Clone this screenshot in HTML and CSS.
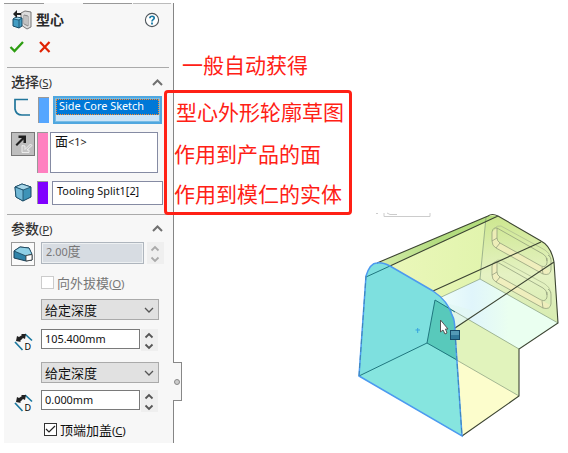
FILE: index.html
```html
<!DOCTYPE html>
<html lang="zh-CN">
<head>
<meta charset="utf-8">
<title>型心</title>
<link rel="stylesheet" href="styles.css">
</head>
<body>
<main class="app">
  <aside class="panel">
    <span class="edge edge-a"></span><span class="edge edge-b"></span><span class="edge edge-c"></span>
    <header class="head">
      <svg class="core-icon" width="20" height="20" viewBox="0 0 20 20">
        <path d="M9 3l4-2 6 1v15l-4 2-6-4z" fill="#ddd" stroke="#777"/>
        <path d="M12 5l4 1v10l-4-2zM14 5v10" fill="#fafafa" stroke="#888"/>
        <path d="M1 9l3-2 6 1v8l-3 2-6-2z" fill="#439dc3" stroke="#174a66"/>
        <path d="M2 9l3-1.500 4 .7-2 1.500z" fill="#9ed3e8"/>
        <path d="M1 9l6 1 3-2M7 10v8" fill="none" stroke="#174a66" stroke-width=".8"/>
        <path d="M1 4l4-4v3h4v2H5v3z" fill="#222"/>
      </svg>
      <h1>型心</h1>
      <svg class="help" width="16" height="16" viewBox="0 0 16 16">
        <circle cx="8" cy="8" r="6.600" fill="#fff" stroke="#4d555b" stroke-width="1.100"/>
        <path d="M5.900 6.200C6 3.500 10.400 3.700 10.200 6.100 10 7.700 8 7.600 8 9.500" fill="none" stroke="#1879a5" stroke-width="1.700"/>
        <path d="M7.100 10.600h1.800v1.800H7.100z" fill="#1879a5"/>
      </svg>
    </header>
    <div class="actions">
      <svg width="16" height="14" viewBox="0 0 16 14"><path d="M1.500 7l4 4L14 2" fill="none" stroke="#2d9d11" stroke-width="2.300"/></svg>
      <svg width="12" height="12" viewBox="0 0 12 12"><path d="M1 1l9.500 10M10.500 1L1 11" stroke="#e02303" stroke-width="2.200"/></svg>
    </div>
    <section class="group selection">
      <h2><span>选择<small>(<u>S</u>)</small></span><svg class="chev" width="11" height="7" viewBox="0 0 11 7"><path d="M1 6l4.500-4.500L10 6"/></svg></h2>
      <div class="pick pick-sketch">
        <svg width="20" height="20" viewBox="0 0 20 20"><path d="M16 2.500H3V12q1 6 7 6h8" fill="none" stroke="#21769b" stroke-width="1.700"/></svg>
        <i class="swatch blue"></i>
        <div class="active-box"><span>Side Core Sketch</span></div>
      </div>
      <div class="pick pick-face">
        <span class="tool pressed"><svg width="22" height="22" viewBox="0 0 22 22"><path d="M3.500 11.500L10 5H6.500V2.500H14V10h-2.500V6.500L5 13z" fill="#202020"/><path d="M18.500 11l-5.500 5.500V13l-3-.500v7h7V17h-2l5-4.500z" fill="#c4c4c4" stroke="#f2f2f2" stroke-width=".9"/></svg></span>
        <i class="swatch pink"></i>
        <div class="box"><b>面</b>&lt;1&gt;</div>
      </div>
      <div class="pick pick-body">
        <svg width="18" height="20" viewBox="0 0 18 20"><path d="M1 5l7-3 9 3v10l-8 4-7-4z" fill="#3d93b7" stroke="#174863"/><path d="M1 5l7-3 9 3-8 3z" fill="#a8d7e9" stroke="#174863" stroke-width=".8"/><path d="M1 5l8 3v11l-7-4z" fill="#71b8d6" stroke="#174863" stroke-width=".8"/></svg>
        <i class="swatch purple"></i>
        <div class="box">Tooling Split1[2]</div>
      </div>
    </section>
    <section class="group params">
      <h2><span>参数<small>(<u>P</u>)</small></span><svg class="chev" width="11" height="7" viewBox="0 0 11 7"><path d="M1 6l4.500-4.500L10 6"/></svg></h2>
      <div class="draft">
        <span class="tool"><svg width="22" height="22" viewBox="0 0 22 22"><path d="M2 8L8 4l9 1 3 7v5l-6 1L2 15z" fill="#2f83a8" stroke="#183f55"/><path d="M2 8L8 4l9 1 3 6-6 2z" fill="#8fd0e6" stroke="#183f55" stroke-width=".8"/><path d="M14 12.500l6-1V17l-6 1z" fill="#fff" stroke="#333" stroke-width=".8"/></svg></span>
        <div class="angle">2.00<b>度</b></div>
        <svg class="spin off" width="17" height="22" viewBox="0 0 17 22"><path d="M4.500 8.500L8 5l3.500 3.500M4.500 15.500L8 19l3.500-3.500"/></svg>
      </div>
      <div class="check muted"><i class="tick"></i><span>向外拔模<small>(<u>O</u>)</small></span></div>
      <div class="select"><span>给定深度</span><svg width="10" height="6" viewBox="0 0 10 6"><path d="M1 1l4 4 4-4"/></svg></div>
      <div class="depth">
        <svg class="dim" width="19" height="20" viewBox="0 0 19 20"><path d="M1 10l7.500 8M11 2l7 6.500" stroke="#1b789f" stroke-width="1.700"/><path d="M2 9l1-5 2 1 3-2-1-1h5l-1 5-2-1-3 3 1 1z" fill="#222"/><text x="10.500" y="18">D</text></svg>
        <div class="num">105.400mm</div>
        <svg class="spin" width="17" height="22" viewBox="0 0 17 22"><path d="M4.500 8.500L8 5l3.500 3.500M4.500 15.500L8 19l3.500-3.500"/></svg>
      </div>
      <div class="select second"><span>给定深度</span><svg width="10" height="6" viewBox="0 0 10 6"><path d="M1 1l4 4 4-4"/></svg></div>
      <div class="depth last">
        <svg class="dim" width="19" height="20" viewBox="0 0 19 20"><path d="M1 10l7.500 8M11 2l7 6.500" stroke="#1b789f" stroke-width="1.700"/><path d="M2 9l1-5 2 1 3-2-1-1h5l-1 5-2-1-3 3 1 1z" fill="#222"/><text x="10.500" y="18">D</text></svg>
        <div class="num">0.000mm</div>
        <svg class="spin" width="17" height="22" viewBox="0 0 17 22"><path d="M4.500 8.500L8 5l3.500 3.500M4.500 15.500L8 19l3.500-3.500"/></svg>
      </div>
      <div class="check cap"><i class="tick"><svg width="11" height="11" viewBox="0 0 11 11"><path d="M1 5l3 3 6-6" fill="none" stroke="#222" stroke-width="1.200"/></svg></i><span>顶端加盖<small>(<u>C</u>)</small></span></div>
    </section>
    <div class="handle"><i></i></div>
  </aside>

  <svg class="model" width="218" height="243" viewBox="350 200 218 243">
    <defs>
      <linearGradient id="top" x1="0" x2="1"><stop stop-color="#edf8bd"/><stop offset=".65" stop-color="#e1f4ad"/><stop offset="1" stop-color="#cce89a"/></linearGradient>
      <linearGradient id="side" x1="0" y1="0" x2="0" y2="1"><stop stop-color="#cde78f"/><stop offset=".55" stop-color="#e5f2c3"/><stop offset="1" stop-color="#d7ecb0"/></linearGradient>
      <linearGradient id="floor" x1="0" x2="1"><stop stop-color="#f1fffa"/><stop offset=".3" stop-color="#e0f5fb"/><stop offset=".6" stop-color="#eafff0"/></linearGradient>
      <linearGradient id="rim" x1="0" x2="1"><stop stop-color="#d5edab"/><stop offset=".5" stop-color="#b3dc80"/><stop offset="1" stop-color="#b5de7c"/></linearGradient>
    </defs>
    <g class="toolbar"><path d="M376 213.500h2M384 213v3.500h46V213"/><path d="M387 213l3 1.500h7" stroke="#aaa"/></g>
    <path d="M377 263L488 216Q492 213 498 216L541 241Q551 246 554 262L558 323 519 349V396L462 436 359 376 366 276Q370 265 377 263z" fill="url(#top)"/>
    <path d="M486 218L498 216 541 241Q551 246 554 262L558 323 480 279z" fill="url(#side)"/>
    <path d="M435 300L480 279 558 323 519 349z" fill="url(#floor)"/>
    <path d="M435 300L519 349V396L427 343z" fill="#e1f3bc"/>
    <path d="M427 343L519 396 462 436 359 376z" fill="#fcfdcc"/>
    <path d="M377 263L488 216 498 216 390 266z" fill="url(#rim)"/>
    <path d="M454 328L479 312 435 300z" fill="#e1f6f4" opacity=".8"/>
    <g class="slots">
      <path class="slot-fill" d="M492 232V241Q492 246 496 248L543 274Q548 276 550 271L541 266 500 243Q497 241 497 238V228z"/>
      <path d="M492 232V241Q492 246 496 248L543 274Q550 276 551 270V260Q551 257 548 255M497 228V238Q497 241 500 243L541 266Q546 268 547 263V258M492 232Q493 227 497 228L543 254Q547 256 547 261M492 241l5-3M496 248l4-5M543 274l-1-7"/>
      <path class="slot-rear" d="M494 229Q497 225 501 226L545 250Q550 253 551 259"/>
      <path class="slot-fill" d="M492 266V275Q492 280 496 282L543 308Q548 310 550 305L541 300 500 277Q497 275 497 272V262z"/>
      <path d="M492 266V275Q492 280 496 282L543 308Q550 310 551 304V294Q551 291 548 289M497 262V272Q497 275 500 277L541 300Q546 302 547 297V292M492 266Q493 261 497 262L543 288Q547 290 547 295M492 275l5-3M496 282l4-5M543 308l-1-7"/>
      <path class="slot-rear" d="M494 263Q497 259 501 260L545 284Q550 287 551 293"/>
    </g>
    <g class="inner"><path d="M486 217L480 279 435 300M480 279L558 323M435 300L519 349M427 343L519 396"/></g>
    <path d="M359 376L366 276Q370 263 377 263 382 262 390 266L433 291Q448 301 452 315 455 320 455 332L462 436z" fill="#7ee0df"/>
    <path d="M427 343L359 376 462 436 457 360z" fill="#86e5df"/>
    <path d="M435 300L427 343 456 360 455 327Q453 318 451 309z" fill="#58c9bb"/>
    <path class="hidden-edge" d="M366 277L390 266M359 376L427 343 435 300 455 312M427 343L457 360"/>
    <g class="lines"><path d="M377 263L488 216Q492 213 498 216L541 241Q551 246 554 262L558 323 519 349V396L462 436M390 266L498 216M433 291L541 242M455 328L554 262"/></g>
    <path class="face-edge" d="M359 376L366 276Q370 263 377 263 382 262 390 266L433 291Q448 301 452 315 455 320 455 332L462 436z"/>
    <path class="dashes" d="M359 376L366 276M455 332L462 436"/>
    <path d="M415.500 330H420M417.700 328V333" stroke="#36a3df"/>
    <rect x="450.500" y="330.500" width="9" height="9" fill="#31799c" stroke="#174a68"/><path d="M451 331h8v4h-8z" fill="#5499b6"/>
    <path d="M440.500 320V332L443 330 445 334 447 333 445.500 329H448z" fill="#fff" stroke="#555"/>
  </svg>

  <div class="notes">
    <p class="auto">一般自动获得</p>
    <div class="callout"><p>型心外形轮廓草图</p><p>作用到产品的面</p><p>作用到模仁的实体</p></div>
  </div>
</main>
</body>
</html>
```

FILE: styles.css
```css
* { box-sizing: border-box; }
body { margin: 0; background: #fff; overflow: hidden; }
.app { position: relative; width: 568px; height: 453px; display: flex; align-items: flex-start; font-family: "Noto Sans", "Noto Sans CJK SC", sans-serif; }
h1, h2, p { margin: 0; }
svg { display: block; flex: none; }
.panel { position: relative; width: 170px; height: 440px; margin: 3px 0 0 4px; background: #f7f7f7; border-right: 1px solid #858585; font-size: 10.9px; color: #111; }
.edge { position: absolute; top: 0; height: 1px; background: #999; }
.edge-a { left: 0; width: 40px; }
.edge-b { left: 79px; width: 49px; }
.edge-c { left: 129px; width: 38px; background: #bbb; }
.head { display: flex; align-items: center; height: 34px; padding: 0 13px 0 8px; }
.head h1 { font: bold 14px/20px "Noto Sans CJK SC", sans-serif; margin: -2px 0 0 4px; color: #292929; flex: 1; }
.actions { height: 31px; margin: 0 4px 0 3px; padding: 3px 2px 0; border-bottom: 1px solid #aaa; display: flex; gap: 14px; align-items: flex-start; }
.actions svg:last-child { margin-top: 1px; }
.group h2 { height: 28px; display: flex; align-items: center; justify-content: space-between; padding: 0 10px 0 7px; font: 500 14px/20px "Noto Sans CJK SC", sans-serif; color: #333; }
.group h2 span { margin-top: -2px; }
.group small { font: 11.5px "Noto Sans", sans-serif; letter-spacing: -.2px; }
.chev path { fill: none; stroke: #707070; stroke-width: 2; }
.pick { display: flex; align-items: flex-start; }
.swatch { flex: none; width: 11px; border-left: 1px solid #999; border-top: 1px solid #999; }
.blue { background: #55a6ff; height: 26px; }
.pink { background: #ff80c0; height: 41px; }
.purple { background: #8000ff; height: 23px; }
.pick-sketch { height: 36px; padding-left: 8px; }
.pick-sketch > svg { margin: 1px 0 0 0; }
.pick-sketch .swatch { margin: 1px 4px 0 6px; }
.active-box { width: 109px; height: 28px; border: 2px solid #50a7df; outline: 1px solid #78bce5; outline-offset: -3px; padding: 1px; background: #cce4f7; }
.active-box span { display: block; height: 16px; border: 1px dotted #ff8b29; background: #0078d7; color: #fff; line-height: 12px; padding-left: 2px; white-space: nowrap; }
.pick-face { height: 49px; padding-left: 7px; }
.tool { flex: none; width: 24px; height: 24px; border: 1px solid #999; background: #fafafa; }
.pressed { background: #bebebe; border-color: #777; }
.pick-face .swatch { margin: 0 2px; }
.box { border: 1px solid #858ba3; background: #fff; white-space: nowrap; }
.box b, .angle b { font: 13px/16px "Noto Sans CJK SC", sans-serif; }
.pick-face .box { width: 108px; height: 41px; padding-left: 4px; line-height: 16px; }
.pick-body { height: 34px; border-bottom: 1px solid #aaa; margin: 0 4px 0 3px; padding-left: 7px; }
.pick-body > svg { margin-top: 1px; }
.pick-body .swatch { margin: 0 4px 0 5px; }
.pick-body .box { width: 111px; height: 24px; padding-left: 4px; line-height: 18px; flex: none; }
.params h2 { height: 27px; }
.params h2 span { margin-top: -1px; }
.draft { display: flex; height: 34px; padding-left: 7px; }
.angle { width: 103px; height: 22px; margin-left: 6px; border: 1px solid #aeb5bd; outline: 1px solid #edf0f2; outline-offset: -2px; background: #d7dce2; color: #777; line-height: 17px; padding-left: 4px; }
.spin { background: #efefef; }
.spin path { fill: none; stroke: #555; stroke-width: 1.8; }
.spin.off { margin-left: 3px; }
.spin.off path { stroke: #aaa; }
.check { display: flex; height: 23px; padding-left: 37px; align-items: flex-start; font: 13px/14px "Noto Sans CJK SC", sans-serif; }
.check span { line-height: 12px; }
.tick { width: 13px; height: 13px; border: 1px solid #333; background: #fff; margin-right: 3px; flex: none; }
.muted { color: #777; }
.muted .tick { border-color: #ccc; }
.select { width: 118px; height: 21px; margin-left: 37px; border: 1px solid #aaa; background: #e1e1e1; display: flex; align-items: center; justify-content: space-between; padding: 0 4px 0 3px; font: 13px/19px "Noto Sans CJK SC", sans-serif; }
.select path { fill: none; stroke: #555; stroke-width: 1.3; }
.depth { display: flex; height: 32px; margin-top: 9px; padding-left: 10px; }
.dim { margin-top: 3px; }
.dim text { font: 9px "Noto Sans", sans-serif; }
.num { width: 99px; height: 20px; border: 1px solid #7a7a7a; background: #fff; margin: 0 1px 0 8px; padding-left: 3px; line-height: 18px; }
.second { margin-top: 1px; }
.last { margin-top: 7px; height: 33px; }
.cap { padding-left: 40px; }
.handle { position: absolute; left: 169px; top: 359px; width: 9px; height: 39px; border: 1px solid #888; border-left: 0; background: #f7f7f7; }
.handle i { display: block; width: 6px; height: 6px; margin: 16px 0 0 1px; border: 1px solid #888; border-radius: 50%; background: #ccc; }
.model { margin: 200px 0 0 176px; }
.toolbar path, .inner path, .lines path, .slots path { fill: none; }
.toolbar path { stroke: #ccc; }
.inner path { stroke: #789078; stroke-opacity: .7; stroke-width: .9; }
.lines path { stroke: #3c4433; stroke-width: 1.1; }
.slots path { stroke: #8a9675; stroke-width: .7; }
.slots .slot-rear { stroke: #a9b78e; }
.slots .slot-fill { fill: #f4edbd; fill-opacity: .75; stroke: none; }
.hidden-edge { fill: none; stroke: #20777f; }
.face-edge { fill: none; stroke: #4c9af0; stroke-width: 1.5; }
.dashes { stroke: #387fa6; stroke-width: .8; stroke-dasharray: 5 3; fill: none; }
.notes { position: absolute; left: 164px; top: 51px; width: 190px; color: #ff2015; font: 21px/26px "Noto Sans CJK SC", sans-serif; white-space: nowrap; }
.auto { padding-left: 18px; height: 39px; }
.callout { width: 188px; height: 125px; border: 3px solid #ff2015; border-radius: 4px; padding: 5px 0 0 9px; }
.callout p { height: 42px; }
.callout p + p { margin-left: -2px; height: 40px; }
```
